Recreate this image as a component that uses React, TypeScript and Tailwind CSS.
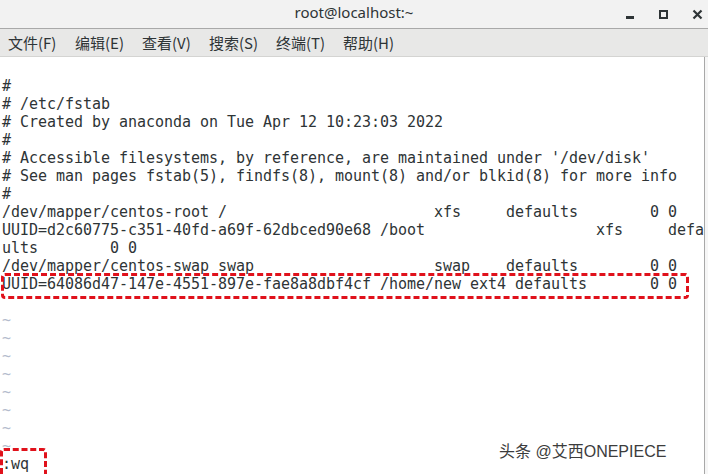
import React from "react";

const lines: { t: string; tilde?: boolean }[] = [
  { t: "" },
  { t: "#" },
  { t: "# /etc/fstab" },
  { t: "# Created by anaconda on Tue Apr 12 10:23:03 2022" },
  { t: "#" },
  { t: "# Accessible filesystems, by reference, are maintained under '/dev/disk'" },
  { t: "# See man pages fstab(5), findfs(8), mount(8) and/or blkid(8) for more info" },
  { t: "#" },
  { t: "/dev/mapper/centos-root /                       xfs     defaults        0 0" },
  { t: "UUID=d2c60775-c351-40fd-a69f-62dbced90e68 /boot                   xfs     defa" },
  { t: "ults        0 0" },
  { t: "/dev/mapper/centos-swap swap                    swap    defaults        0 0" },
  { t: "UUID=64086d47-147e-4551-897e-fae8a8dbf4cf /home/new ext4 defaults       0 0" },
  { t: "" },
  { t: "~", tilde: true },
  { t: "~", tilde: true },
  { t: "~", tilde: true },
  { t: "~", tilde: true },
  { t: "~", tilde: true },
  { t: "~", tilde: true },
  { t: "~", tilde: true },
  { t: "~", tilde: true },
  { t: ":wq" },
];

const menus = ["文件(F)", "编辑(E)", "查看(V)", "搜索(S)", "终端(T)", "帮助(H)"];

export default function App() {
  return (
    <div className="w-[708px] h-[474px] overflow-hidden flex flex-col bg-white relative">
      {/* Title bar */}
      <div
        className="h-[29px] shrink-0 bg-[#f2f2f2] border-b border-[#a9a9a9] relative flex items-center justify-center"
        style={{ fontFamily: '"Noto Sans", "Noto Sans CJK SC", sans-serif' }}
      >
        <span className="text-[15px] text-[#2e3436] leading-none -mt-[4px]">root@localhost:~</span>
        <div className="absolute right-0 top-0 h-full flex items-center">
          <div className="w-[34px] flex justify-center">
            <div className="w-[8px] h-[3px] bg-[#2e3436] mt-[6px]" />
          </div>
          <div className="w-[33px] flex justify-center">
            <div className="w-[9px] h-[9px] border-[2px] border-[#2e3436]" />
          </div>
          <div className="w-[22px] ml-[6px] flex justify-center">
            <svg width="11" height="11" viewBox="0 0 11 11">
              <path d="M1.5 1.5 L9.5 9.5 M9.5 1.5 L1.5 9.5" stroke="#2e3436" strokeWidth="2.2" />
            </svg>
          </div>
        </div>
      </div>
      {/* Menu bar */}
      <div
        className="h-[28px] shrink-0 bg-[#e8e8e7] border-b border-[#d4d4d2] flex items-center pl-[8px] gap-[17px] text-[15px] text-[#2e3436]"
        style={{ fontFamily: '"Noto Sans CJK SC", "Noto Sans", sans-serif' }}
      >
        {menus.map((m) => (
          <span key={m} className="leading-none w-[50px] whitespace-nowrap">{m}</span>
        ))}
      </div>
      {/* Terminal */}
      <div className="flex-1 flex min-h-0">
        <div
          className="flex-1 pl-[2px] pt-[2px] text-[15px] leading-[18px] text-[#2e3436] whitespace-pre tracking-[-0.03px]"
          style={{ fontFamily: '"DejaVu Sans Mono", monospace' }}
        >
          {lines.map((l, i) => (
            <div key={i} className={"h-[18px] " + (l.tilde ? "text-[#b4bccd]" : "")}>
              {l.t}
            </div>
          ))}
        </div>
        <div className="w-[5px] shrink-0 bg-[#f6f6f6] border-l border-[#a8a8a8]" />
      </div>

      {/* Annotation boxes */}
      <div className="absolute left-[1px] top-[273px] w-[688px] h-[26px] border-[3px] border-dashed border-[#e0111b] rounded-[4px]" />
      <div className="absolute left-0 top-[448px] w-[47px] h-[30px] border-[3px] border-dashed border-[#e0111b] rounded-[4px]" />

      {/* Watermark */}
      <div
        className="absolute left-[499px] top-[441px] text-[16px] leading-[22px] text-[#3c3c3c]"
        style={{
          fontFamily: '"Liberation Sans", "Noto Sans CJK SC", sans-serif',
          textShadow: "0 0 2px #fff, 0 0 2px #fff",
        }}
      >
        头条 @艾西ONEPIECE
      </div>
    </div>
  );
}
